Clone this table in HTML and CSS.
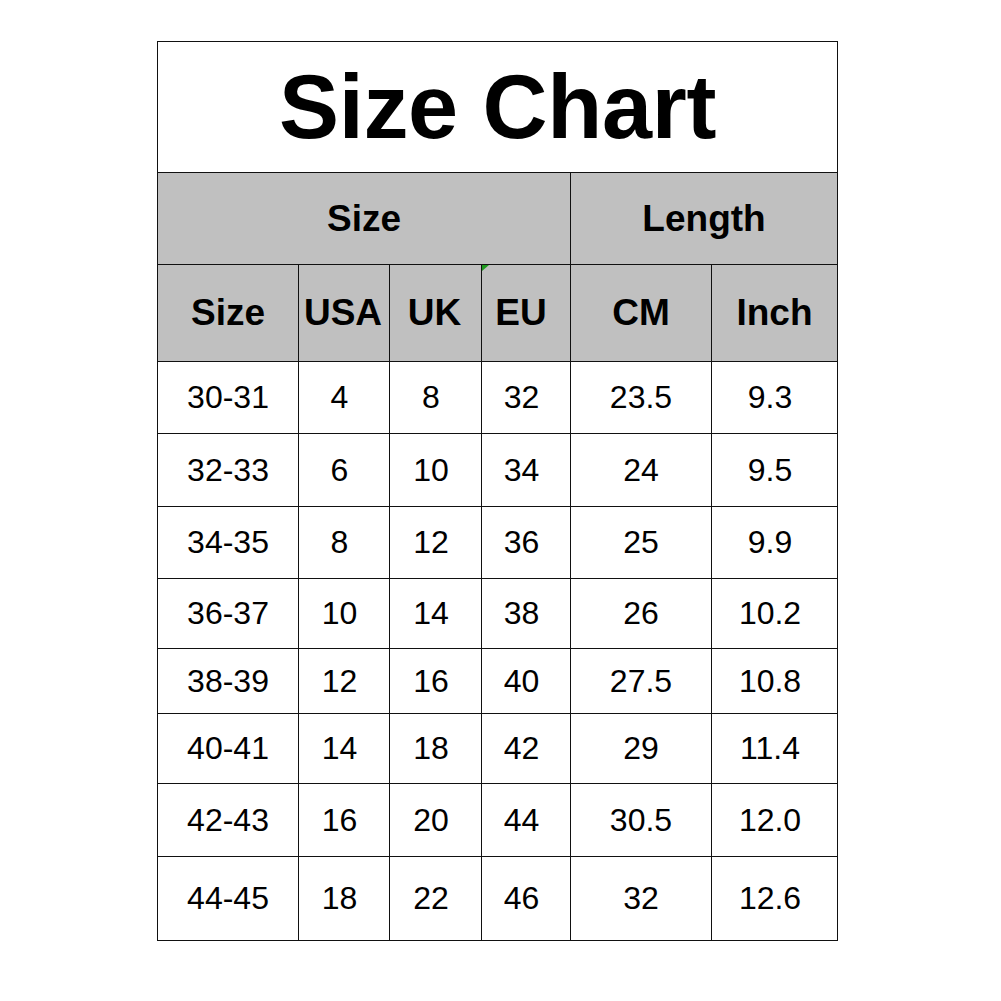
FILE: index.html
```html
<!DOCTYPE html>
<html>
<head>
<meta charset="utf-8">
<link rel="stylesheet" href="styles.css">
</head>
<body>
<table class="chart">
  <colgroup>
    <col class="c1"><col class="c2"><col class="c3"><col class="c4"><col class="c5"><col class="c6">
  </colgroup>
  <tr class="r-title"><td colspan="6" class="title">Size Chart</td></tr>
  <tr class="r-h1"><th colspan="4">Size</th><th colspan="2">Length</th></tr>
  <tr class="r-h2"><th>Size</th><th>USA</th><th>UK</th><th class="marked">EU</th><th>CM</th><th>Inch</th></tr>
  <tr class="data r72"><td>30-31</td><td>4</td><td>8</td><td>32</td><td>23.5</td><td>9.3</td></tr>
  <tr class="data r73"><td>32-33</td><td>6</td><td>10</td><td>34</td><td>24</td><td>9.5</td></tr>
  <tr class="data r72"><td>34-35</td><td>8</td><td>12</td><td>36</td><td>25</td><td>9.9</td></tr>
  <tr class="data r70"><td>36-37</td><td>10</td><td>14</td><td>38</td><td>26</td><td>10.2</td></tr>
  <tr class="data r65"><td>38-39</td><td>12</td><td>16</td><td>40</td><td>27.5</td><td>10.8</td></tr>
  <tr class="data r70"><td>40-41</td><td>14</td><td>18</td><td>42</td><td>29</td><td>11.4</td></tr>
  <tr class="data r73"><td>42-43</td><td>16</td><td>20</td><td>44</td><td>30.5</td><td>12.0</td></tr>
  <tr class="data r84"><td>44-45</td><td>18</td><td>22</td><td>46</td><td>32</td><td>12.6</td></tr>
</table>
</body>
</html>
```
FILE: styles.css
```css
html, body {
  margin: 0;
  padding: 0;
  background: #ffffff;
}
body {
  font-family: "Liberation Sans", Arial, sans-serif;
  color: #000;
}
.chart {
  margin: 41px 0 0 157px;
  border-collapse: collapse;
  table-layout: fixed;
  width: 680px;
}
.c1 { width: 141px; }
.c2 { width: 91px; }
.c3 { width: 92px; }
.c4 { width: 89px; }
.c5 { width: 141px; }
.c6 { width: 126px; }
.chart td, .chart th {
  border: 1px solid #111111;
  padding: 0;
  text-align: center;
  vertical-align: middle;
  font-size: 32px;
  font-weight: normal;
  white-space: nowrap;
}
.chart th {
  background: #c0c0c0;
  font-weight: bold;
  font-size: 37px;
}
.chart td.title {
  font-size: 90px;
  font-weight: bold;
  letter-spacing: -0.3px;
}
.data td:nth-child(2),
.data td:nth-child(3),
.data td:nth-child(4),
.data td:nth-child(6) {
  padding-right: 9px;
}
.r-h2 th:nth-child(2),
.r-h2 th:nth-child(3) {
  padding-right: 2px;
}
.r-h2 th.marked {
  padding-right: 10px;
}
.r-title { height: 131px; }
.r-h1 { height: 92px; }
.r-h2 { height: 97px; }
.r72 { height: 72px; }
.r73 { height: 73px; }
.r70 { height: 70px; }
.r65 { height: 65px; }
.r84 { height: 84px; }
.marked {
  position: relative;
}
.marked::before {
  content: "";
  position: absolute;
  left: 0;
  top: 0;
  width: 0;
  height: 0;
  border-top: 6px solid #1f9a1f;
  border-right: 7px solid transparent;
}
```
